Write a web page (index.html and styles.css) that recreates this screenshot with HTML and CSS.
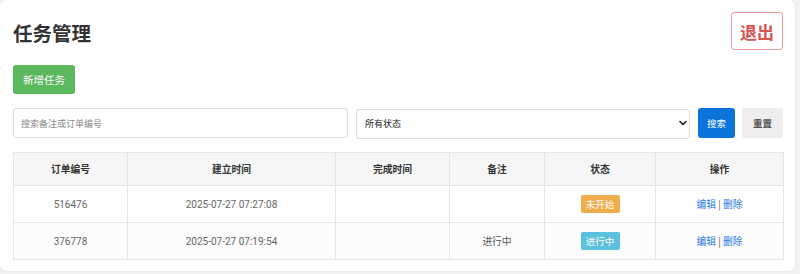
FILE: index.html
```html
<!DOCTYPE html>
<html lang="zh-CN">
<head>
<meta charset="utf-8">
<title>任务管理</title>
<link rel="stylesheet" href="styles.css">
</head>
<body>
<div class="page">
  <div class="card">
    <div class="header">
      <h1 class="title">任务管理</h1>
      <button class="btn-logout">退出</button>
    </div>
    <div class="actions">
      <button class="btn-add">新增任务</button>
    </div>
    <div class="search-row">
      <input class="search-input" type="text" placeholder="搜索备注或订单编号">
      <div class="select-wrap">
        <select class="status-select">
          <option>所有状态</option>
        </select>
        <svg class="chevron" width="8" height="6" viewBox="0 0 8 6"><path d="M1 1.5 L4 4.5 L7 1.5" fill="none" stroke="#222" stroke-width="1.6" stroke-linecap="round" stroke-linejoin="round"/></svg>
      </div>
      <button class="btn-search">搜索</button>
      <button class="btn-reset">重置</button>
    </div>
    <table class="task-table">
      <colgroup>
        <col class="c1"><col class="c2"><col class="c3"><col class="c4"><col class="c5"><col class="c6">
      </colgroup>
      <thead>
        <tr><th>订单编号</th><th>建立时间</th><th>完成时间</th><th>备注</th><th>状态</th><th>操作</th></tr>
      </thead>
      <tbody>
        <tr>
          <td class="num">516476</td>
          <td class="num">2025-07-27 07:27:08</td>
          <td></td>
          <td></td>
          <td><span class="badge badge-wait">未开始</span></td>
          <td><a class="link">编辑</a><span class="sep"> | </span><a class="link">删除</a></td>
        </tr>
        <tr class="alt">
          <td class="num">376778</td>
          <td class="num">2025-07-27 07:19:54</td>
          <td></td>
          <td>进行中</td>
          <td><span class="badge badge-doing">进行中</span></td>
          <td><a class="link">编辑</a><span class="sep"> | </span><a class="link">删除</a></td>
        </tr>
      </tbody>
    </table>
  </div>
</div>
</body>
</html>
```

FILE: styles.css
```css
* { box-sizing: border-box; }
html, body {
  margin: 0;
  padding: 0;
  background: #f2f2f2;
  font-family: "Noto Sans CJK SC", "Noto Sans", sans-serif;
  color: #333;
}
.page {
  padding: 0 5px 3px 0;
}
.card {
  background: #fff;
  border-radius: 6px;
  box-shadow: 0 0 3px rgba(0,0,0,0.08);
  padding: 12px 12px 12px 13px;
  height: 271px;
}
.header {
  display: flex;
  justify-content: space-between;
  align-items: center;
  height: 38px;
}
.title {
  margin: 0;
  font-size: 19.5px;
  font-weight: 700;
  color: #333;
  line-height: 1;
  padding-top: 3px;
}
.btn-logout {
  width: 52px;
  height: 38px;
  border: 1px solid #ef9a9a;
  border-radius: 3px;
  background: #fff;
  color: #d9534f;
  font-family: inherit;
  font-size: 17px;
  font-weight: 700;
  padding: 0;
}
.actions {
  margin-top: 15px;
  display: flex;
}
.btn-add {
  width: 62px;
  height: 29px;
  border: none;
  border-radius: 3px;
  background: #5cb85c;
  color: #fff;
  font-family: inherit;
  font-size: 10.5px;
  padding: 0;
}
.search-row {
  margin-top: 14px;
  display: flex;
  align-items: center;
  height: 30px;
}
.search-input {
  width: 335px;
  height: 30px;
  border: 1px solid #ddd;
  border-radius: 3px;
  padding: 0 7px;
  font-family: inherit;
  font-size: 9px;
  color: #333;
}
.search-input::placeholder { color: #888; }
.select-wrap {
  position: relative;
  margin-left: 8px;
  width: 334px;
  height: 30px;
}
.status-select {
  appearance: none;
  -webkit-appearance: none;
  width: 100%;
  height: 30px;
  border: 1px solid #ddd;
  border-radius: 3px;
  background: #fff;
  padding: 0 8px;
  font-family: inherit;
  font-size: 9px;
  color: #222;
}
.chevron {
  position: absolute;
  right: 3px;
  top: 12px;
  pointer-events: none;
}
.btn-search {
  margin-left: 8px;
  width: 37px;
  height: 30px;
  border: none;
  border-radius: 3px;
  background: #0a74da;
  color: #fff;
  font-family: inherit;
  font-size: 9.5px;
  padding: 0;
}
.btn-reset {
  margin-left: 7px;
  width: 41px;
  height: 30px;
  border: none;
  border-radius: 3px;
  background: #eeeeee;
  color: #555;
  font-family: inherit;
  font-size: 9.5px;
  font-weight: 700;
  padding: 0;
}
.task-table {
  margin-top: 14px;
  width: 770px;
  border-collapse: collapse;
  table-layout: fixed;
  font-size: 9.75px;
}
.c1 { width: 114px; }
.c2 { width: 208px; }
.c3 { width: 114px; }
.c4 { width: 95px; }
.c5 { width: 111px; }
.c6 { width: 128px; }
.task-table th, .task-table td {
  border: 1px solid #e6e6e6;
  text-align: center;
  padding: 0;
}
.task-table th {
  height: 33px;
  background: #f6f6f6;
  font-weight: 700;
  color: #333;
}
.task-table td {
  height: 37px;
  color: #555;
}
.task-table tr.alt td { background: #fcfcfc; }
.num {
  font-family: "Roboto", "Noto Sans CJK SC", sans-serif;
  font-size: 10px;
  color: #666;
}
.task-table td.num { color: #666; }
.badge {
  display: inline-block;
  width: 39px;
  height: 18px;
  line-height: 18px;
  border-radius: 2px;
  color: #fff;
  font-size: 9.5px;
}
.badge-wait { background: #f0ad4e; }
.badge-doing { background: #5bc0de; }
.link {
  color: #2a7ae2;
  cursor: pointer;
}
.sep { color: #6b5a3e; }
```
